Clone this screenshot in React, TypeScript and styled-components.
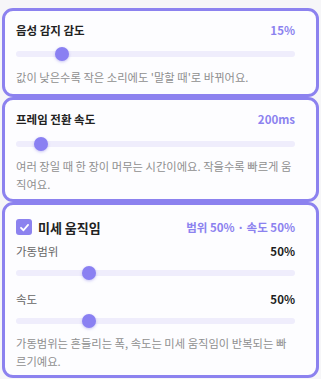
import React from "react";
import styled, { createGlobalStyle } from "styled-components";

const GlobalStyle = createGlobalStyle`
  html, body {
    margin: 0;
    padding: 0;
    background: #f6f6f8;
    font-family: "Noto Sans CJK KR", "Noto Sans", sans-serif;
  }
`;

const Page = styled.div`
  display: flex;
  flex-direction: column;
  padding: 8px 2px 0;
`;

const Card = styled.section<{ $top: number; $bottom: number }>`
  border: 3px solid #8c82ef;
  border-radius: 11px;
  background: #fdfdff;
  padding: ${(p) => p.$top}px 21px ${(p) => p.$bottom}px 11px;
  display: flex;
  flex-direction: column;
`;

const Row = styled.div<{ $gap?: number }>`
  display: flex;
  align-items: center;
  justify-content: space-between;
  height: 18px;
  margin-top: ${(p) => p.$gap ?? 0}px;
`;

const Title = styled.span`
  font-size: 11.5px;
  font-weight: 700;
  color: #222;
  display: flex;
  align-items: center;
  gap: 6px;
`;

const BigTitle = styled(Title)`
  font-size: 13px;
`;

const Value = styled.span<{ $dark?: boolean }>`
  font-size: 11.5px;
  font-weight: 700;
  color: ${(p) => (p.$dark ? "#1e1e1e" : "#8c82ef")};
`;

const Label = styled.span`
  font-size: 11.5px;
  color: #666;
`;

const Track = styled.div<{ $gap: number }>`
  position: relative;
  height: 14px;
  margin-top: ${(p) => p.$gap}px;
  display: flex;
  align-items: center;
  &::before {
    content: "";
    flex: 1;
    height: 6px;
    border-radius: 3px;
    background: #efedfc;
  }
`;

const Thumb = styled.span`
  position: absolute;
  top: 0;
  width: 14px;
  height: 14px;
  margin-left: -7px;
  border-radius: 50%;
  background: #8a80f2;
  box-shadow: 0 1px 3px rgba(100, 90, 220, 0.35);
`;

const Help = styled.p<{ $gap: number }>`
  margin: ${(p) => p.$gap}px 0 0;
  font-size: 11.3px;
  line-height: 18px;
  color: #8f8f8f;
`;

const Check = styled.span`
  width: 16px;
  height: 16px;
  border-radius: 3px;
  background: #8c82ef;
  display: inline-flex;
  align-items: center;
  justify-content: center;
`;

function Slider({ pos, gap }: { pos: number; gap: number }) {
  return (
    <Track $gap={gap}>
      <Thumb style={{ left: `${pos * 100}%` }} />
    </Track>
  );
}

export default function App() {
  return (
    <>
      <GlobalStyle />
      <Page>
        <Card $top={10} $bottom={8}>
          <Row>
            <Title>음성 감지 감도</Title>
            <Value>15%</Value>
          </Row>
          <Slider pos={0.165} gap={8} />
          <Help $gap={7}>값이 낮은수록 작은 소리에도 '말할 때'로 바뀌어요.</Help>
        </Card>
        <Card $top={10} $bottom={6}>
          <Row>
            <Title>프레임 전환 속도</Title>
            <Value>200ms</Value>
          </Row>
          <Slider pos={0.09} gap={9} />
          <Help $gap={6}>
            여러 장일 때 한 장이 머무는 시간이에요. 작을수록 빠르게 움직여요.
          </Help>
        </Card>
        <Card $top={13} $bottom={5}>
          <Row>
            <BigTitle>
              <Check>
                <svg width="11" height="11" viewBox="0 0 12 12">
                  <path
                    d="M2.2 6.3 L4.9 9 L9.9 3.2"
                    fill="none"
                    stroke="#fff"
                    strokeWidth="2"
                    strokeLinecap="round"
                    strokeLinejoin="round"
                  />
                </svg>
              </Check>
              미세 움직임
            </BigTitle>
            <Value>범위 50% · 속도 50%</Value>
          </Row>
          <Row $gap={6}>
            <Label>가동범위</Label>
            <Value $dark>50%</Value>
          </Row>
          <Slider pos={0.26} gap={6} />
          <Row $gap={10}>
            <Label>속도</Label>
            <Value $dark>50%</Value>
          </Row>
          <Slider pos={0.26} gap={6} />
          <Help $gap={6}>
            가동범위는 흔들리는 폭, 속도는 미세 움직임이 반복되는 빠르기예요.
          </Help>
        </Card>
      </Page>
    </>
  );
}
